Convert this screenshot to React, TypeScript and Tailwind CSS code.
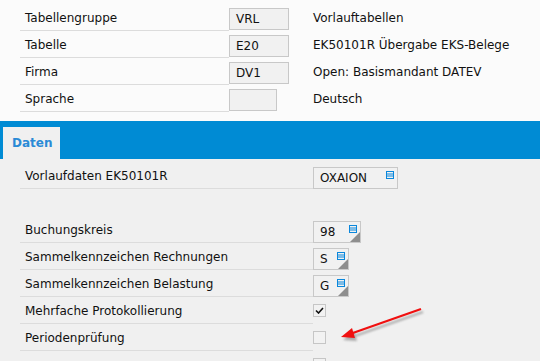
import React from 'react';

const font = { fontFamily: '"DejaVu Sans", Verdana, sans-serif' };

function ListIcon() {
  return (
    <svg width="8" height="8" viewBox="0 0 8 8" className="absolute right-[3px] top-[3px]">
      <rect x="0.5" y="0.5" width="7" height="7" fill="none" stroke="#0a87dc" strokeWidth="1" />
      <line x1="0" y1="3" x2="8" y2="3" stroke="#0a87dc" strokeWidth="1" />
      <line x1="0" y1="5" x2="8" y2="5" stroke="#0a87dc" strokeWidth="1" />
    </svg>
  );
}

function Corner() {
  return (
    <svg width="10" height="10" viewBox="0 0 10 10" className="absolute right-0 bottom-0">
      <polygon points="10,0 10,10 0,10" fill="#8e8e8e" />
    </svg>
  );
}

function Box({ value, w, list = false, corner = false }: { value: string; w: string; list?: boolean; corner?: boolean }) {
  return (
    <div className={`relative h-[22px] ${w} border border-[#c8c8c8] bg-[#f1f1f1] flex items-center pl-[6px] text-[12px] text-[#111]`}>
      {value}
      {list && <ListIcon />}
      {corner && <Corner />}
    </div>
  );
}

function Check({ checked }: { checked: boolean }) {
  return (
    <div className="w-[13px] h-[13px] border border-[#c6c6c6] bg-[#f2f2f2] flex items-center justify-center">
      {checked && (
        <svg width="9" height="7" viewBox="0 0 9 7">
          <path d="M1 3.5 L3.5 6 L8 1" fill="none" stroke="#111" strokeWidth="1.6" />
        </svg>
      )}
    </div>
  );
}

const header = [
  { label: 'Tabellengruppe', value: 'VRL', desc: 'Vorlauftabellen', w: 'w-[60px]' },
  { label: 'Tabelle', value: 'E20', desc: 'EK50101R Übergabe EKS-Belege', w: 'w-[60px]' },
  { label: 'Firma', value: 'DV1', desc: 'Open: Basismandant DATEV', w: 'w-[60px]' },
  { label: 'Sprache', value: '', desc: 'Deutsch', w: 'w-[48px]' },
];

function Row({ label, children, line = true, bottom = false }: { label: string; children?: React.ReactNode; line?: boolean; bottom?: boolean }) {
  return (
    <div className="flex h-[27px]">
      <div className={`ml-[20px] w-[293px] pl-[5px] pt-[1px] flex items-center text-[12px] text-[#111] ${line ? 'border-b border-[#dcdcdc]' : ''}`}>
        {label}
      </div>
      <div className={`flex ${bottom ? 'items-end' : 'items-center'}`}>{children}</div>
    </div>
  );
}

export default function App() {
  return (
    <div className="relative w-[540px] h-[361px] overflow-hidden bg-[#f0f0f0]" style={font}>
      <div className="bg-[#fbfbfb] pt-[4px] pb-[9px]">
        {header.map(r => (
          <div key={r.label} className="flex h-[27px]">
            <div className="ml-[20px] w-[209px] pl-[5px] pt-[1px] border-b border-[#dcdcdc] flex items-center text-[12px] text-[#111]">
              {r.label}
            </div>
            <div className="w-[84px] flex items-center pt-[2px]">
              <Box value={r.value} w={r.w} />
            </div>
            <div className="flex items-center pt-[1px] text-[12px] text-[#111]">{r.desc}</div>
          </div>
        ))}
      </div>

      <div className="h-[38px] bg-[#008bd4] flex items-end pl-[3px]">
        <div className="w-[57px] h-[32px] bg-[#f0f0f0] flex items-center pl-[9px] text-[12px] font-bold text-[#2a8ad6]">
          Daten
        </div>
      </div>

      <div className="pt-[3px]">
        <Row label="Vorlaufdaten EK50101R" bottom>
          <Box value="OXAION" w="w-[85px]" list />
        </Row>
        <Row label="" line={false} />
        <Row label="Buchungskreis" bottom>
          <Box value="98" w="w-[48px]" list corner />
        </Row>
        <Row label="Sammelkennzeichen Rechnungen" bottom>
          <Box value="S" w="w-[36px]" list corner />
        </Row>
        <Row label="Sammelkennzeichen Belastung" bottom>
          <Box value="G" w="w-[36px]" list corner />
        </Row>
        <Row label="Mehrfache Protokollierung">
          <Check checked />
        </Row>
        <Row label="Periodenprüfung">
          <Check checked={false} />
        </Row>
        <Row label="">
          <Check checked={false} />
        </Row>
      </div>

      <svg className="absolute left-[330px] top-[300px]" width="100" height="50" viewBox="330 300 100 50">
        <defs>
          <filter id="sh" x="-20%" y="-50%" width="140%" height="200%">
            <feGaussianBlur stdDeviation="1.2" />
          </filter>
        </defs>
        <g filter="url(#sh)" opacity="0.45" transform="translate(2,3)">
          <line x1="421" y1="309" x2="350" y2="334" stroke="#555" strokeWidth="2.2" />
          <polygon points="341,337 352,328 355,338" fill="#555" />
        </g>
        <line x1="421" y1="309" x2="350" y2="334" stroke="#f01010" strokeWidth="2.2" />
        <polygon points="341,337 352,328 355,338" fill="#f01010" />
      </svg>
    </div>
  );
}
